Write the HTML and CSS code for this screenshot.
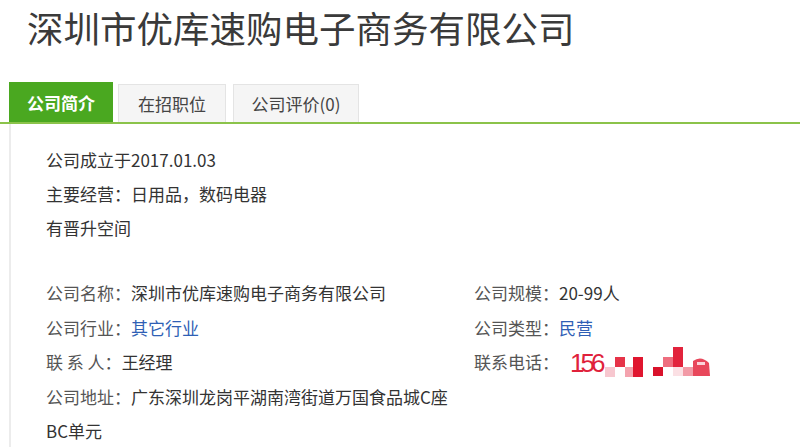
FILE: index.html
```html
<!DOCTYPE html>
<html lang="zh">
<head>
<meta charset="utf-8">
<link rel="stylesheet" href="styles.css">
</head>
<body>
<h1 class="title">深圳市优库速购电子商务有限公司</h1>
<div class="tabs">
  <div class="tab active">公司简介</div>
  <div class="tab">在招职位</div>
  <div class="tab">公司评价(0)</div>
</div>
<div class="panel">
  <div class="intro">
    <p>公司成立于2017.01.03</p>
    <p>主要经营：日用品，数码电器</p>
    <p>有晋升空间</p>
  </div>
  <div class="info">
    <div class="col left">
      <div class="row"><span class="lbl">公司名称：</span><span>深圳市优库速购电子商务有限公司</span></div>
      <div class="row"><span class="lbl">公司行业：</span><span class="blue">其它行业</span></div>
      <div class="row"><span class="lbl">联 系 人：</span><span>王经理</span></div>
      <div class="row"><span class="lbl">公司地址：</span><span>广东深圳龙岗平湖南湾街道万国食品城C座</span></div>
      <div class="row"><span>BC单元</span></div>
    </div>
    <div class="col right">
      <div class="row"><span class="lbl">公司规模：</span><span>20-99人</span></div>
      <div class="row"><span class="lbl">公司类型：</span><span class="blue">民营</span></div>
      <div class="row phone-row"><span class="lbl">联系电话：</span><span class="phone"><span class="num">156</span><svg class="mosaic" width="105" height="30" viewBox="0 0 105 30">
          <rect x="0" y="20" width="10" height="10" fill="#f7c7cf"/>
          <rect x="10" y="10" width="10" height="10" fill="#e63348"/>
          <rect x="20" y="20" width="8" height="10" fill="#f4a3ae"/>
          <rect x="28" y="10" width="10" height="20" fill="#e0162f"/>
          <rect x="48" y="20" width="10" height="9" fill="#d9122b"/>
          <rect x="58" y="10" width="10" height="10" fill="#ee6e7f"/>
          <rect x="68" y="0" width="10" height="20" fill="#e2233c"/>
          <rect x="68" y="20" width="10" height="9" fill="#fbe0e4"/>
          <rect x="78" y="20" width="10" height="9" fill="#f29aa6"/>
          <path d="M88 14 Q96 8 104 16 L105 29 L88 29 Z" fill="#e8475b"/>
          <rect x="92" y="15" width="8" height="3" fill="#fbd3d9"/>
        </svg></span></div>
    </div>
  </div>
</div>
</body>
</html>
```
FILE: styles.css
```css
html, body {
  margin: 0;
  padding: 0;
  background: #fff;
  font-family: "Noto Sans CJK SC", "Liberation Sans", sans-serif;
  color: #333;
}
.title {
  margin: 0;
  padding: 6px 0 0 27px;
  height: 76px;
  box-sizing: border-box;
  font-size: 36.5px;
  font-weight: normal;
  color: #3a3a3a;
  line-height: 44px;
  letter-spacing: 0;
  white-space: nowrap;
}
.tabs {
  display: flex;
  align-items: flex-end;
  gap: 5px;
  padding-left: 9px;
  height: 48px;
  box-sizing: border-box;
  border-bottom: 2px solid #8bc34a;
}
.tab {
  height: 38px;
  line-height: 38px;
  text-align: center;
  font-size: 17px;
  color: #444;
  background: #f5f5f5;
  border: 1px solid #e4e4e4;
  border-bottom: none;
  box-sizing: border-box;
}
.tab:nth-child(2) { width: 108px; }
.tab:nth-child(3) { width: 126px; margin-left: 2px; }
.tab.active {
  width: 104px;
  height: 40px;
  line-height: 40px;
  background: #4aa820;
  border-color: #4aa820;
  color: #fff;
  font-weight: bold;
}
.panel {
  margin-left: 9px;
  border-left: 2px solid #ececec;
  padding: 19px 0 0 35px;
  height: 330px;
  box-sizing: border-box;
  font-size: 17px;
}
.intro p {
  margin: 0;
  line-height: 34px;
  color: #333;
}
.info {
  display: flex;
  margin-top: 31px;
}
.col.left { width: 428px; }
.row {
  line-height: 34.5px;
  height: 34.5px;
  color: #333;
  white-space: nowrap;
}
.lbl { color: #555; }
.blue { color: #2f5fb5; }
.phone-row {
  display: flex;
  align-items: center;
}
.phone {
  display: inline-flex;
  align-items: flex-end;
  margin-left: 11px;
  height: 30px;
}
.num {
  color: #e0213b;
  font-size: 26px;
  line-height: 26px;
  letter-spacing: -4px;
  font-family: "Liberation Sans", sans-serif;
  margin-bottom: 1px;
}
.mosaic { margin-left: 4px; display: block; }
```
